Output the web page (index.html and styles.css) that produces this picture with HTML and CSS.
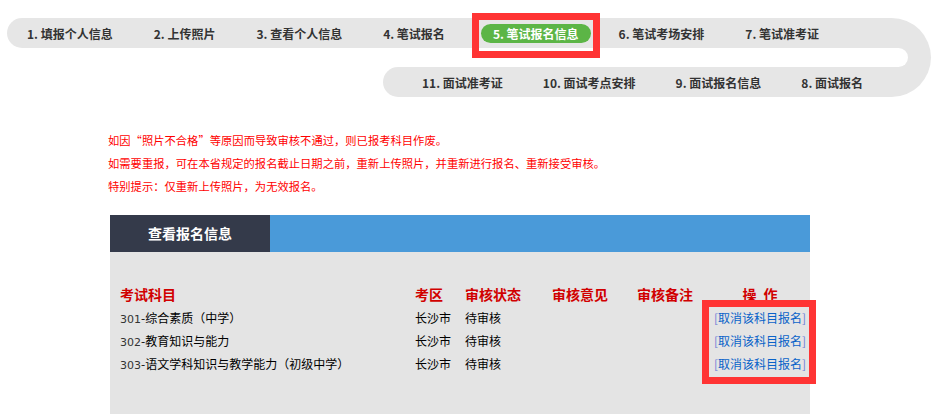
FILE: index.html
```html
<!DOCTYPE html>
<html lang="zh-CN">
<head>
<meta charset="utf-8">
<title>查看报名信息</title>
<link rel="stylesheet" href="styles.css">
</head>
<body>
<div class="steps">
  <div class="row row1">
    <span class="step">1. 填报个人信息</span>
    <span class="step">2. 上传照片</span>
    <span class="step">3. 查看个人信息</span>
    <span class="step">4. 笔试报名</span>
    <span class="step current">5. 笔试报名信息<span class="mark mark-pill"></span></span>
    <span class="step">6. 笔试考场安排</span>
    <span class="step">7. 笔试准考证</span>
  </div>
  <div class="cap"></div>
  <div class="gap"></div>
  <div class="row row2">
    <span class="step">11. 面试准考证</span>
    <span class="step">10. 面试考点安排</span>
    <span class="step">9. 面试报名信息</span>
    <span class="step">8. 面试报名</span>
  </div>
</div>

<div class="notice">
  <p>如因<span class="fw">“</span>照片不合格<span class="fw">”</span>等原因而导致审核不通过，则已报考科目作废。</p>
  <p>如需要重报，可在本省规定的报名截止日期之前，重新上传照片，并重新进行报名、重新接受审核。</p>
  <p>特别提示：仅重新上传照片，为无效报名。</p>
</div>

<div class="panel">
  <div class="panel-head">
    <div class="panel-tab">查看报名信息</div>
  </div>
  <div class="panel-body">
    <div class="grid">
      <div class="th">考试科目</div>
      <div class="th">考区</div>
      <div class="th">审核状态</div>
      <div class="th">审核意见</div>
      <div class="th">审核备注</div>
      <div class="th op">操&ensp;作</div>

      <div class="td"><span class="code">301</span>-综合素质（中学）</div>
      <div class="td">长沙市</div>
      <div class="td">待审核</div>
      <div class="td"></div>
      <div class="td"></div>
      <div class="td op"><a class="cancel" href="#"><span class="br">[</span>取消该科目报名<span class="br">]</span></a></div>

      <div class="td"><span class="code">302</span>-教育知识与能力</div>
      <div class="td">长沙市</div>
      <div class="td">待审核</div>
      <div class="td"></div>
      <div class="td"></div>
      <div class="td op"><a class="cancel" href="#"><span class="br">[</span>取消该科目报名<span class="br">]</span></a></div>

      <div class="td"><span class="code">303</span>-语文学科知识与教学能力（初级中学）</div>
      <div class="td">长沙市</div>
      <div class="td">待审核</div>
      <div class="td"></div>
      <div class="td"></div>
      <div class="td op"><a class="cancel" href="#"><span class="br">[</span>取消该科目报名<span class="br">]</span></a></div>
    </div>
    <div class="mark mark-links"></div>
  </div>
</div>
</body>
</html>
```
FILE: styles.css
```css
* { box-sizing: border-box; }
html, body { margin: 0; padding: 0; background: #fff; }
body {
  font-family: "Noto Sans CJK SC", "Liberation Sans", sans-serif;
  font-size: 12px;
  color: #000;
  overflow: hidden;
}

/* ---------- step track ---------- */
.steps {
  display: grid;
  grid-template-columns: 884px 40px;
  grid-template-rows: 30px 19px 30px;
  width: 924px;
  margin: 18px 0 0 7px;
}
.row {
  background: #e6e6e6;
  display: flex;
  align-items: center;
  gap: 41px;
  border-radius: 15px 0 0 15px;
}
.row1 { grid-column: 1; grid-row: 1; padding-left: 20px; }
.row2 { grid-column: 1; grid-row: 3; margin-left: 376px; padding-left: 39px; gap: 40px; }
.cap {
  grid-column: 2;
  grid-row: 1 / 4;
  background: #e6e6e6;
  border-radius: 0 40px 40px 0;
}
.gap {
  grid-column: 1;
  grid-row: 2;
  margin-right: -17px;
  background: #fff;
  border-radius: 0 10px 10px 0;
  position: relative;
  z-index: 1;
}
.step {
  font-weight: bold;
  font-size: 12px;
  color: #333;
  white-space: nowrap;
  line-height: 19px;
}
.step.current {
  position: relative;
  background: #5cb546;
  color: #fff;
  border-radius: 10px;
  padding: 0 12px;
  height: 19px;
  margin: 0 -13px 0 -5px;
}

/* red annotation frames */
.mark {
  position: absolute;
  z-index: 5;
  border: 7px solid #ff3434;
  pointer-events: none;
}
.mark-pill {
  left: -9px;
  top: -11px;
  width: 128px;
  height: 45px;
}
.mark-links {
  left: 592px;
  top: 48px;
  width: 114px;
  height: 84px;
}

/* ---------- notice ---------- */
.notice {
  margin: 32px 0 0 0;
  padding-left: 108px;
  color: #ff0000;
  font-size: 11.3px;
  line-height: 23px;
}
.notice p { margin: 0; }
.fw { font-feature-settings: "fwid" 1; }

/* ---------- panel ---------- */
.panel {
  width: 700px;
  margin: 17px 0 0 110px;
}
.panel-head {
  height: 37px;
  background: #4a9ad9;
  display: flex;
}
.panel-tab {
  position: relative;
  width: 160px;
  background: #343a4a;
  color: #fff;
  font-size: 14px;
  font-weight: bold;
  line-height: 37px;
  text-align: center;
}
.panel-tab::after {
  content: "";
  position: absolute;
  left: 27px;
  top: 37px;
  border-left: 18px solid transparent;
  border-right: 18px solid transparent;
  border-top: 18px solid #343a4a;
}
.panel-body {
  position: relative;
  background: #e4e4e4;
  height: 180px;
  padding: 29px 0 0 10px;
}
.grid {
  display: grid;
  grid-template-columns: 295px 50px 87px 85px 73px 100px;
  grid-template-rows: 25px 23px 23px 23px;
  align-items: center;
}
.th {
  color: #d10000;
  font-weight: bold;
  font-size: 14px;
  white-space: nowrap;
}
.td {
  font-size: 12px;
  color: #000;
  white-space: nowrap;
}
.op { text-align: center; }
.code {
  font-family: "DejaVu Sans", sans-serif;
  font-size: 11px;
  color: #333;
}
.cancel {
  color: #0a63c9;
  text-decoration: none;
}
.cancel .br { color: #6e7fd6; }
```
